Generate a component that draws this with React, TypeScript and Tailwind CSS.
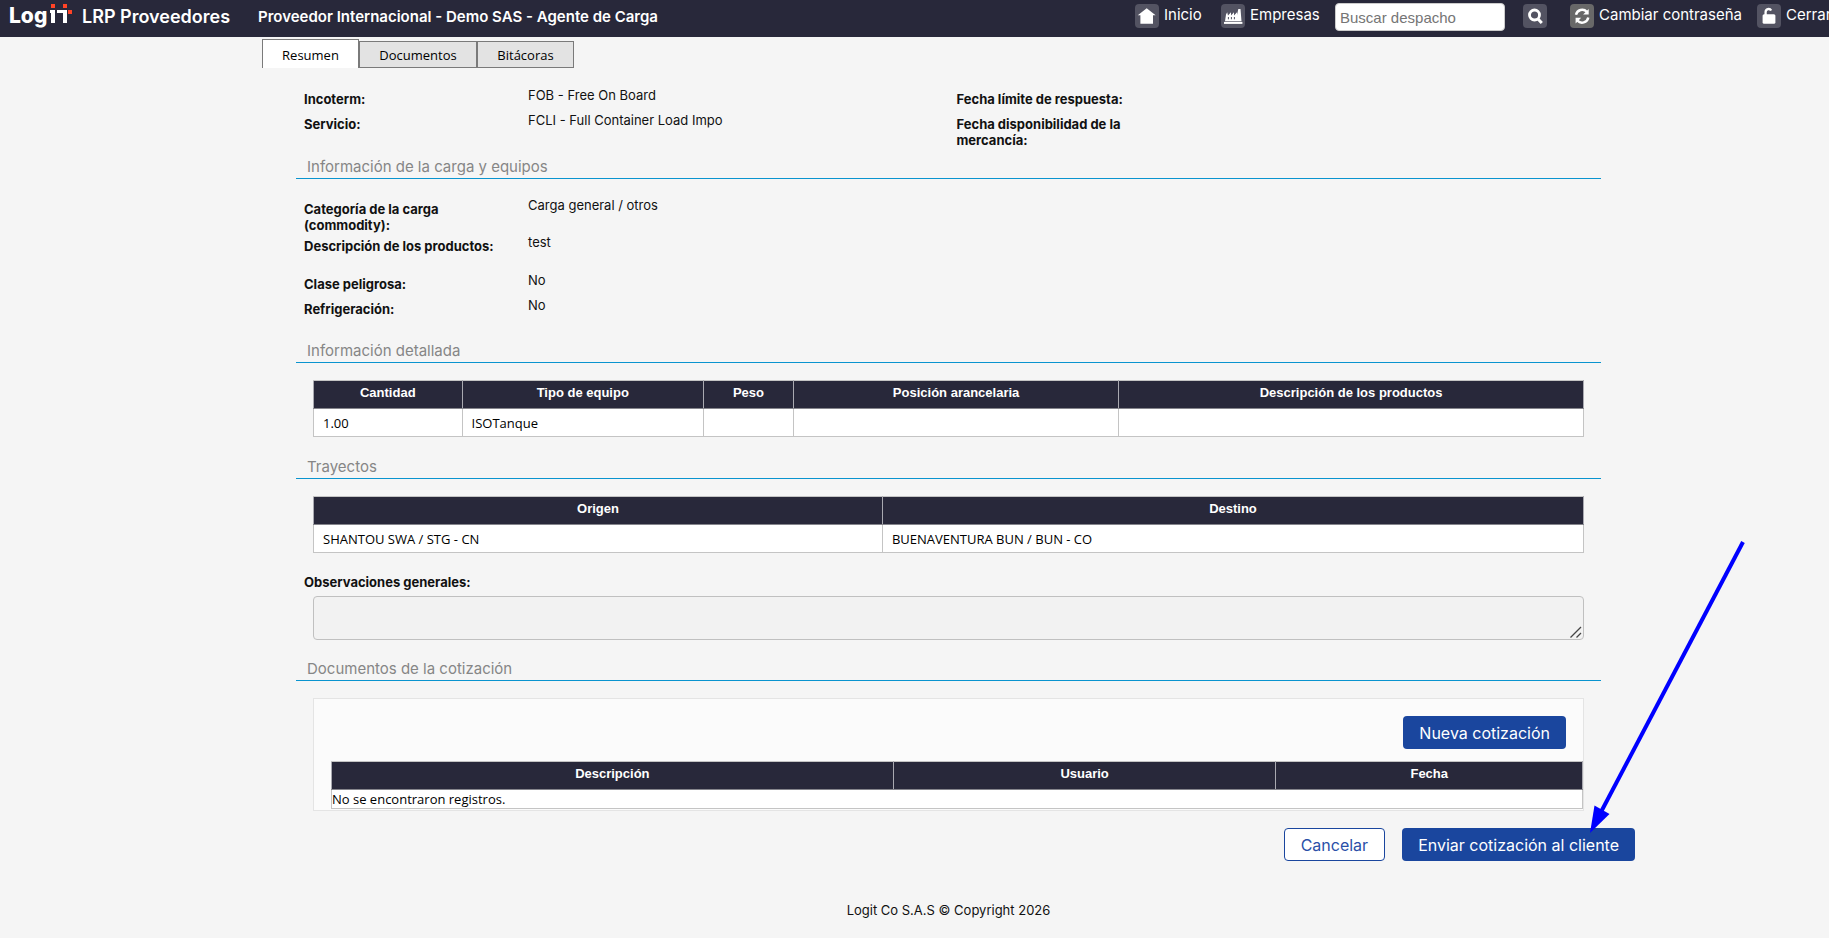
import type { ReactNode } from "react";

function Logo() {
  return (
    <svg width="66" height="32" viewBox="0 0 66 32" role="img" aria-label="Logit" className="shrink-0">
      <text x="0" y="23" fill="#fff" className="font-['Inter',sans-serif] text-[21px] font-extrabold">
        Log
      </text>
      <g fill="#fff">
        <rect x="41" y="10" width="4" height="3" />
        <rect x="42" y="10" width="4" height="13" />
        <rect x="48" y="10" width="10" height="3" />
        <rect x="54" y="10" width="4" height="13" />
      </g>
      <g fill="#ff4326">
        <rect x="42" y="4" width="4" height="4" />
        <rect x="54" y="4" width="4" height="4" />
        <rect x="59" y="10" width="4" height="4" />
      </g>
    </svg>
  );
}

function Tile({ children, gray }: { children: ReactNode; gray?: boolean }) {
  return (
    <span className={`flex size-6 shrink-0 items-center justify-center rounded ${gray ? "bg-[#686868]" : "bg-[#535362]"}`}>
      <svg width="24" height="24" viewBox="0 0 24 24" fill="#fff" aria-hidden="true">
        {children}
      </svg>
    </span>
  );
}

function NavLink({ icon, gray, text, className }: { icon: ReactNode; gray?: boolean; text: string; className: string }) {
  return (
    <a href="#" className={`flex shrink-0 gap-[5px] text-[15px] leading-[22px] text-white ${className}`}>
      <Tile gray={gray}>{icon}</Tile>
      {text}
    </a>
  );
}

function Field({ label, value }: { label: string; value?: string }) {
  return (
    <div className="flex gap-4 text-[13px] leading-4">
      <dt className="w-52 shrink-0 pt-1 font-bold">{label}</dt>
      <dd>{value}</dd>
    </div>
  );
}

function SectionTitle({ children }: { children: ReactNode }) {
  return (
    <h2 className="mb-[17px] border-b border-[#0a94cf] px-[11px] pb-px text-[15px] leading-5 text-[#868686]">{children}</h2>
  );
}

function Grid({ heads, rows, empty }: { heads: { text: string; width: string }[]; rows: string[][]; empty?: string }) {
  return (
    <table className="w-full table-fixed border-collapse border border-[#c4c4c4] bg-white">
      <thead>
        <tr className="h-7 bg-[#28283a]">
          {heads.map((h) => (
            <th
              key={h.text}
              className={`border border-b-[#85858c] border-t-[#c4c4c4] border-x-[#a9a9b0] pb-[3px] font-['Liberation_Sans',sans-serif] text-[13px] font-bold leading-4 text-white ${h.width}`}
            >
              {h.text}
            </th>
          ))}
        </tr>
      </thead>
      <tbody className="font-['Open_Sans',sans-serif] text-[13px] leading-[18px] text-black">
        {rows.map((r, i) => (
          <tr key={i} className="h-7">
            {r.map((c, j) => (
              <td key={j} className="border border-[#c4c4c4] px-[9px]">
                {c}
              </td>
            ))}
          </tr>
        ))}
        {empty && (
          <tr>
            <td colSpan={heads.length}>{empty}</td>
          </tr>
        )}
      </tbody>
    </table>
  );
}

export default function App() {
  return (
    <div className="relative min-h-screen overflow-hidden bg-[#f5f5f5] font-['Inter',sans-serif] text-[#111]">
      <header className="flex h-[37px] items-start overflow-hidden whitespace-nowrap bg-[#28283a] pl-[9px] text-white">
        <Logo />
        <span className="ml-[7px] text-[18px] font-semibold leading-[34px]">LRP Proveedores</span>
        <span className="ml-7 text-[15px] font-semibold leading-[34px]">
          Proveedor Internacional - Demo SAS - Agente de Carga
        </span>
        <nav className="ml-auto flex w-[694px] shrink-0 items-start overflow-hidden pt-1">
          <NavLink
            className="w-[86px]"
            text="Inicio"
            icon={<path d="M11.7 4.3 20.6 11.2H18v8.6H5.4v-8.6H2.8z" />}
          />
          <NavLink
            className="w-[114px]"
            text="Empresas"
            icon={
              <>
                <path d="M4 17.2 5 10.5l1.2-2.2.8 3.2 3-3.2v3.2l3-3.2v3.2l3-3.2v2.7L17.3 5h2.2l1 12.2z" />
                <rect x="3" y="17.9" width="18.4" height="2" />
                <path d="M7.4 13v2.3M10.4 13v2.3M13.4 13v2.3" stroke="#535362" strokeWidth="1" />
              </>
            }
          />
          <input
            type="text"
            aria-label="Buscar despacho"
            placeholder="Buscar despacho"
            className="-mt-px h-7 w-[170px] shrink-0 rounded border border-[#ccc] bg-white px-1 font-['Liberation_Sans',sans-serif] text-[15px] text-black placeholder:text-[#757575]"
          />
          <button type="button" aria-label="Buscar" className="ml-[18px] mr-[23px]">
            <Tile>
              <circle cx="11.5" cy="11" r="5" fill="none" stroke="#fff" strokeWidth="2.8" />
              <path d="m15 15 3.8 4" stroke="#fff" strokeWidth="3" />
            </Tile>
          </button>
          <NavLink
            className="w-[187px]"
            gray
            text="Cambiar contraseña"
            icon={
              <>
                <path d="M6 10.8a6.3 6.3 0 0 1 10.8-3M18.3 13.6a6.3 6.3 0 0 1-10.8 3" fill="none" stroke="#fff" strokeWidth="2.4" />
                <path d="M18.7 5v5.6h-5.6zM5.6 19.4v-5.6h5.6z" />
              </>
            }
          />
          <NavLink
            className=""
            text="Cerrar"
            icon={
              <>
                <rect x="5.6" y="10.2" width="12.8" height="9.6" rx="1.5" />
                <path d="M8.6 11V8a3 3 0 0 1 5.6-1.5" fill="none" stroke="#fff" strokeWidth="2.3" />
              </>
            }
          />
        </nav>
      </header>

      <main className="pl-[262px] pr-[194px] pt-[2px]">
        <div role="tablist" className="mb-[19px] flex items-end font-['Open_Sans',sans-serif] text-[13px] leading-[18px] text-black">
          <button
            type="button"
            role="tab"
            aria-selected="true"
            className="h-[29px] w-[97px] border border-b-0 border-[#7a7a7a] bg-white pt-px"
          >
            Resumen
          </button>
          <button type="button" role="tab" aria-selected="false" className="h-[27px] w-[118px] border border-[#7a7a7a] bg-[#e3e3e3]">
            Documentos
          </button>
          <button type="button" role="tab" aria-selected="false" className="h-[27px] w-[97px] border border-[#7a7a7a] bg-[#e3e3e3]">
            Bitácoras
          </button>
        </div>

        <div className="px-[34px]">
          <div className="mb-[9px] grid grid-cols-2 px-2">
            <dl className="grid auto-rows-[25px]">
              <Field label="Incoterm:" value="FOB - Free On Board" />
              <Field label="Servicio:" value="FCLI - Full Container Load Impo" />
            </dl>
            <dl className="grid grid-rows-[25px_36px] pl-2">
              <Field label="Fecha límite de respuesta:" />
              <Field label="Fecha disponibilidad de la mercancía:" />
            </dl>
          </div>

          <SectionTitle>Información de la carga y equipos</SectionTitle>
          <dl className="mb-[23px] grid grid-rows-[37px_38px_25px_21px] px-2 pt-px">
            <Field label="Categoría de la carga (commodity):" value="Carga general / otros" />
            <Field label="Descripción de los productos:" value="test" />
            <Field label="Clase peligrosa:" value="No" />
            <Field label="Refrigeración:" value="No" />
          </dl>

          <SectionTitle>Información detallada</SectionTitle>
          <div className="mb-5 px-[17px]">
            <Grid
              heads={[
                { text: "Cantidad", width: "w-[11.7%]" },
                { text: "Tipo de equipo", width: "w-[19%]" },
                { text: "Peso", width: "w-[7.1%]" },
                { text: "Posición arancelaria", width: "w-[25.6%]" },
                { text: "Descripción de los productos", width: "w-[36.6%]" },
              ]}
              rows={[["1.00", "ISOTanque", "", "", ""]]}
            />
          </div>

          <SectionTitle>Trayectos</SectionTitle>
          <div className="mb-[21px] px-[17px]">
            <Grid
              heads={[
                { text: "Origen", width: "w-[44.8%]" },
                { text: "Destino", width: "w-[55.2%]" },
              ]}
              rows={[["SHANTOU SWA / STG - CN", "BUENAVENTURA BUN / BUN - CO"]]}
            />
          </div>

          <label htmlFor="obs" className="mb-[6px] block px-2 text-[13px] font-bold leading-4">
            Observaciones generales:
          </label>
          <div className="mb-[19px] px-[17px]">
            <div className="relative">
              <textarea
                id="obs"
                className="block h-11 w-full resize-none rounded border border-[#c0c0c0] bg-[#f2f2f2] px-2 py-1 text-[13px]"
              />
              <svg
                className="pointer-events-none absolute bottom-[2px] right-[2px]"
                width="12"
                height="12"
                viewBox="0 0 12 12"
                stroke="#444"
                strokeWidth="1.3"
                aria-hidden="true"
              >
                <path d="M0.5 11.5 11 1M6.5 11.5 11 7" />
              </svg>
            </div>
          </div>

          <SectionTitle>Documentos de la cotización</SectionTitle>
          <div className="mx-[17px] mb-[17px] border border-[#e4e4e4] bg-[#fbfbfb] pb-px pl-[17px] pt-[17px]">
            <div className="mb-3 flex justify-end pr-[17px]">
              <button type="button" className="h-[33px] rounded bg-[#1a469e] px-4 text-[16px] text-white">
                Nueva cotización
              </button>
            </div>
            <Grid
              heads={[
                { text: "Descripción", width: "w-[44.9%]" },
                { text: "Usuario", width: "w-[30.6%]" },
                { text: "Fecha", width: "w-[24.5%]" },
              ]}
              rows={[]}
              empty="No se encontraron registros."
            />
          </div>
        </div>

        <div className="flex justify-end gap-[17px] text-[16px]">
          <button type="button" className="h-[33px] rounded border border-[#1a469e] bg-white px-4 text-[#2a4fa8]">
            Cancelar
          </button>
          <button type="button" className="h-[33px] rounded bg-[#1a469e] px-4 text-white">
            Enviar cotización al cliente
          </button>
        </div>

        <footer className="mt-10 pb-4 text-center text-[13px] leading-[18px]">Logit Co S.A.S © Copyright 2026</footer>
      </main>

      {/* Callout arrow pointing at the submit button */}
      <svg
        className="pointer-events-none absolute right-[80px] top-[538px]"
        width="164"
        height="298"
        viewBox="1585 538 164 298"
        aria-hidden="true"
      >
        <path d="M1743 542 1601 812" stroke="#00f" strokeWidth="4" fill="none" />
        <path d="M1590 833 1594.5 805.5 1609.5 814z" fill="#00f" />
      </svg>
    </div>
  );
}
